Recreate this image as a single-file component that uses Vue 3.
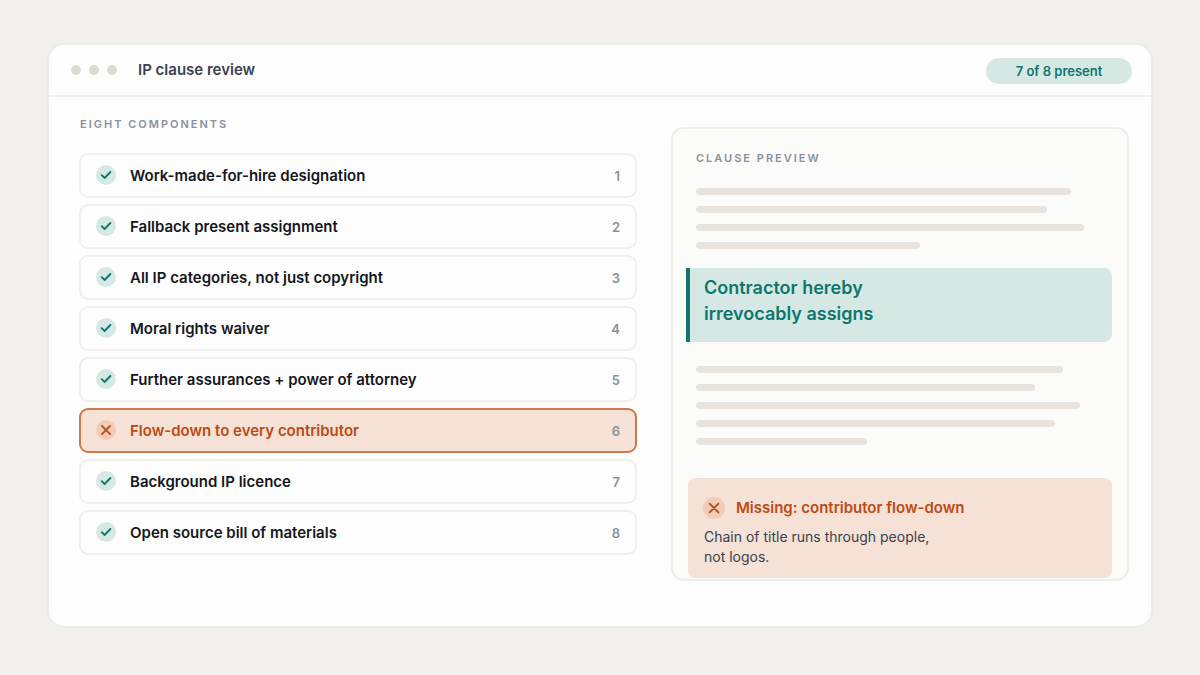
<script setup>
const components = [
  { name: 'Work-made-for-hire designation', present: true },
  { name: 'Fallback present assignment', present: true },
  { name: 'All IP categories, not just copyright', present: true },
  { name: 'Moral rights waiver', present: true },
  { name: 'Further assurances + power of attorney', present: true },
  { name: 'Flow-down to every contributor', present: false },
  { name: 'Background IP licence', present: true },
  { name: 'Open source bill of materials', present: true }
]
const presentCount = components.filter((c) => c.present).length
const linesBefore = [92, 86, 95, 55]
const linesAfter = [90, 83, 94, 88, 42]
</script>

<template>
  <div class="page">
    <main class="window">
      <header class="bar">
        <div class="dots"><span></span><span></span><span></span></div>
        <h1 class="title">IP clause review</h1>
        <span class="chip">{{ presentCount }} of {{ components.length }} present</span>
      </header>
      <div class="body">
        <section class="checklist">
          <h2 class="label">EIGHT COMPONENTS</h2>
          <ol class="list">
            <li v-for="(c, i) in components" :key="c.name" class="item" :class="{ missing: !c.present }">
              <svg class="icon" viewBox="0 0 20 20" aria-hidden="true">
                <circle cx="10" cy="10" r="10" :fill="c.present ? '#d5e8e3' : '#f0cbb6'" />
                <path v-if="c.present" d="M5.7 10.2 L8.6 13 L14.4 7" class="stroke ok" />
                <path v-else d="M5.9 5.9 L14.1 14.1 M14.1 5.9 L5.9 14.1" class="stroke bad" />
              </svg>
              <span class="name">{{ c.name }}</span>
              <span class="num">{{ i + 1 }}</span>
            </li>
          </ol>
        </section>
        <section class="preview">
          <h2 class="label">CLAUSE PREVIEW</h2>
          <div class="lines first">
            <span v-for="w in linesBefore" :key="w" class="line" :style="{ width: w + '%' }"></span>
          </div>
          <div class="highlight">
            <p>Contractor hereby<br />irrevocably assigns</p>
          </div>
          <div class="lines">
            <span v-for="w in linesAfter" :key="w" class="line" :style="{ width: w + '%' }"></span>
          </div>
          <div class="alert">
            <h3 class="alert-title">
              <svg class="alert-icon" viewBox="0 0 22 22" aria-hidden="true">
                <circle cx="11" cy="11" r="11" fill="#f0cbb6" />
                <path d="M6.6 6.6 L15.4 15.4 M15.4 6.6 L6.6 15.4" class="stroke bad" />
              </svg>
              Missing: contributor flow-down
            </h3>
            <p class="alert-text">Chain of title runs through people,<br />not logos.</p>
          </div>
        </section>
      </div>
    </main>
  </div>
</template>

<style>
body {
  background: #f2f0ec;
}
</style>

<style scoped>
.page {
  box-sizing: border-box;
  min-height: 100vh;
  padding: 43px 47px 47px;
  display: flex;
  background: #f2f0ec;
  color: #14171c;
  font-family: Inter, "Liberation Sans", sans-serif;
}
.page * {
  box-sizing: border-box;
}
h1, h2, h3, p, ol {
  margin: 0;
  padding: 0;
}
.window {
  flex: 1;
  background: #fdfdfd;
  border: 2px solid #ecebe6;
  border-radius: 17px;
}
.bar {
  display: flex;
  align-items: flex-start;
  padding: 13px 19px 11px 22px;
  border-bottom: 2px solid #eeede9;
}
.dots {
  display: flex;
  gap: 8px;
  padding-top: 7px;
}
.dots span {
  width: 10px;
  height: 10px;
  border-radius: 50%;
  background: #dddad3;
}
.title {
  margin-left: 21px;
  font-size: 15px;
  font-weight: 600;
  line-height: 24px;
  color: #3a424d;
}
.chip {
  margin-left: auto;
  min-width: 146px;
  text-align: center;
  background: #d5e8e3;
  color: #0f766e;
  border-radius: 13px;
  font-size: 13px;
  font-weight: 600;
  line-height: 26px;
}
.body {
  display: grid;
  grid-template-columns: 558fr 458fr;
  gap: 34px;
  align-items: start;
  padding: 20px 22px 40px 30px;
}
.label {
  font-size: 11px;
  font-weight: 600;
  letter-spacing: 2px;
  line-height: 14px;
  color: #8a919c;
}
.checklist .label {
  padding-left: 1px;
}
.list {
  list-style: none;
  margin-top: 22px;
  display: flex;
  flex-direction: column;
  gap: 6px;
}
.item {
  display: flex;
  align-items: center;
  height: 45px;
  padding: 0 15px;
  border: 2px solid #f0efeb;
  border-radius: 9px;
}
.icon {
  width: 20px;
  height: 20px;
  margin: 0 14px 2px 0;
}
.stroke {
  fill: none;
  stroke-width: 1.8;
  stroke-linecap: round;
  stroke-linejoin: round;
}
.ok {
  stroke: #0f766e;
}
.bad {
  stroke: #bb4a14;
}
.name {
  flex: 1;
  font-size: 15px;
  font-weight: 600;
  line-height: 20px;
}
.num {
  font-size: 13px;
  font-weight: 600;
  line-height: 20px;
  color: #8a919c;
}
.missing {
  background: #f5e1d5;
  border-color: #d0774e;
}
.missing .name {
  color: #bb4a14;
}
.preview {
  margin-top: 10px;
  padding: 22px 23px 1px;
  background: #fbfcf9;
  border: 2px solid #eeede9;
  border-radius: 13px;
}
.lines {
  display: flex;
  flex-direction: column;
  gap: 11px;
  margin-top: 24px;
}
.lines.first {
  margin-top: 23px;
}
.line {
  height: 7px;
  border-radius: 4px;
  background: #e8e4dd;
}
.highlight {
  margin: 19px -8px 0 -10px;
  padding: 7px 14px 15px;
  border-left: 4px solid #0f766e;
  border-radius: 0 8px 8px 0;
  background: #d5e8e3;
  color: #0f766e;
  font-size: 18px;
  font-weight: 600;
  line-height: 26px;
}
.alert {
  margin: 33px -8px 0;
  padding: 18px 15px 11px;
  border-radius: 8px;
  background: #f5e1d5;
}
.alert-title {
  display: flex;
  align-items: center;
  gap: 11px;
  font-size: 15px;
  font-weight: 600;
  line-height: 24px;
  color: #bb4a14;
}
.alert-icon {
  width: 22px;
  height: 22px;
}
.alert-text {
  margin: 7px 0 0 1px;
  font-size: 14px;
  line-height: 20px;
  color: #3a424d;
}
</style>
